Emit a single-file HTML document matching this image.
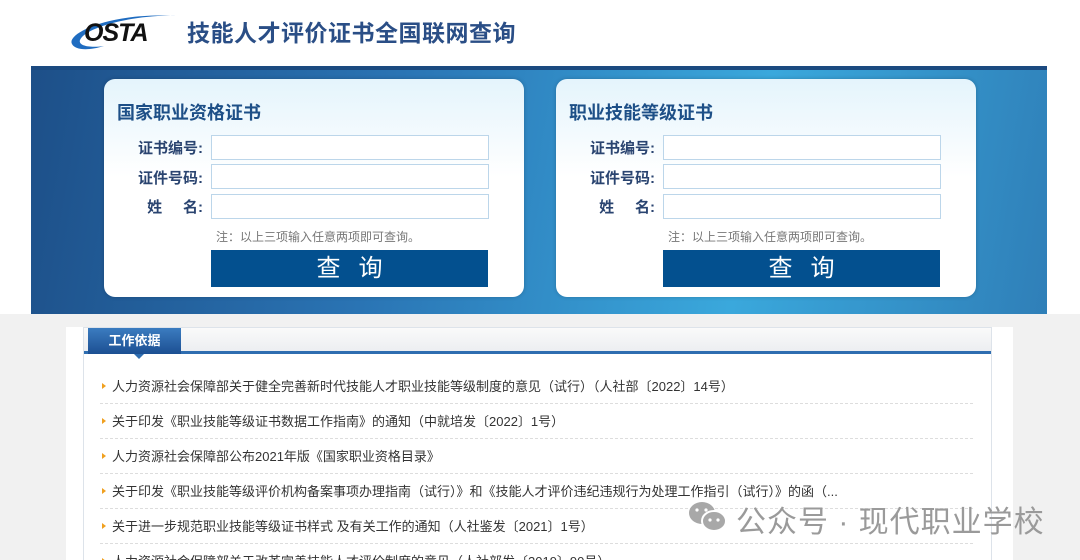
<!DOCTYPE html>
<html style="width:1080px;height:560px;overflow:hidden"><head><meta charset="utf-8"><style>
*{margin:0;padding:0;box-sizing:border-box}
body{width:1080px;height:560px;overflow:hidden;background:#fff;font-family:"Liberation Sans","Noto Sans CJK SC",sans-serif;position:relative}
.abs{position:absolute}
.title{left:187px;top:14px;font-size:23px;font-weight:bold;color:#2a4e86;letter-spacing:0.5px}
.banner{left:31px;top:66px;width:1016px;height:248px;background:linear-gradient(100deg,#1d4f88 0%,#2a74b4 35%,#3aa8dc 70%,#2f7fb8 100%);border-top:4px solid #1b4a80}
.card{width:420px;height:218px;top:79px;border-radius:11px;background:linear-gradient(#e4f4fc,#fff 45%);box-shadow:0 0 4px rgba(0,0,0,.2)}
.card h2{position:absolute;left:13px;top:20px;font-size:18px;color:#1d4f87;font-weight:bold}
.lab{position:absolute;right:321px;font-size:15px;font-weight:bold;color:#2a4470;text-align:right;width:80px}
.inp{position:absolute;left:107px;width:278px;height:25px;border:1px solid #bcd6ea;background:#fff}
.note{position:absolute;left:112px;top:149px;font-size:12px;color:#777}
.btn{position:absolute;left:107px;top:171px;width:277px;height:37px;background:#03508f;color:#fff;font-size:24px;text-align:center;line-height:37px;letter-spacing:18px;text-indent:18px}
.gray{left:0;top:314px;width:1080px;height:246px;background:#f1f1f1}
.box{left:66px;top:327px;width:947px;height:233px;background:#fff}
.panel{left:83px;top:327px;width:909px;height:233px;border:1px solid #dde3ea;border-bottom:none;background:#fff}
.tabbar{left:84px;top:328px;width:907px;height:26px;background:linear-gradient(#fafafa,#eceef1);border-bottom:3px solid #2e6db0}
.tab{left:88px;top:328px;width:93px;height:26px;background:linear-gradient(#3b7cc0,#1c4f92);color:#fff;font-size:13px;font-weight:bold;text-align:center;line-height:26px}
.arr{left:134px;top:354px;width:0;height:0;border-left:5px solid transparent;border-right:5px solid transparent;border-top:5px solid #2e6db0}
.item{left:100px;width:873px;height:35px;font-size:13px;color:#333;border-bottom:1px dashed #ddd;line-height:35px;padding-left:12px;white-space:nowrap;overflow:hidden}
.item:before{content:"";position:absolute;left:2px;top:14px;border-top:3px solid transparent;border-bottom:3px solid transparent;border-left:4px solid #f0a020}
.wm{left:736px;top:497px;font-size:30px;color:#9a9a9a;letter-spacing:1px}
</style></head><body>
<svg class="abs" style="left:68px;top:8px" width="112" height="44" viewBox="0 0 112 44">
<path d="M4 36 C-2 26 40 4 108 8 C72 6 18 18 12 32 C10 38 22 40 36 38 C20 43 7 42 4 36Z" fill="#1f6cc0"/>
<text x="16" y="33" font-family="Liberation Sans" font-style="italic" font-weight="bold" font-size="25" fill="#111" letter-spacing="-1">OSTA</text>
</svg>
<div class="abs title">技能人才评价证书全国联网查询</div>
<div class="abs banner"></div>
<div class="abs card" style="left:104px">
<h2>国家职业资格证书</h2>
<div class="lab" style="top:58px">证书编号:</div><div class="inp" style="top:56px"></div>
<div class="lab" style="top:88px">证件号码:</div><div class="inp" style="top:85px"></div>
<div class="lab" style="top:117px">姓&nbsp;&nbsp;&nbsp;&nbsp;&nbsp;名:</div><div class="inp" style="top:115px"></div>
<div class="note">注：以上三项输入任意两项即可查询。</div>
<div class="btn">查询</div>
</div>
<div class="abs card" style="left:556px">
<h2>职业技能等级证书</h2>
<div class="lab" style="top:58px">证书编号:</div><div class="inp" style="top:56px"></div>
<div class="lab" style="top:88px">证件号码:</div><div class="inp" style="top:85px"></div>
<div class="lab" style="top:117px">姓&nbsp;&nbsp;&nbsp;&nbsp;&nbsp;名:</div><div class="inp" style="top:115px"></div>
<div class="note">注：以上三项输入任意两项即可查询。</div>
<div class="btn">查询</div>
</div>
<div class="abs gray"></div>
<div class="abs box"></div>
<div class="abs panel"></div>
<div class="abs tabbar"></div>
<div class="abs tab">工作依据</div>
<div class="abs arr"></div>
<div class="abs item" style="top:369px">人力资源社会保障部关于健全完善新时代技能人才职业技能等级制度的意见（试行）（人社部〔2022〕14号）</div>
<div class="abs item" style="top:404px">关于印发《职业技能等级证书数据工作指南》的通知（中就培发〔2022〕1号）</div>
<div class="abs item" style="top:439px">人力资源社会保障部公布2021年版《国家职业资格目录》</div>
<div class="abs item" style="top:474px">关于印发《职业技能等级评价机构备案事项办理指南（试行）》和《技能人才评价违纪违规行为处理工作指引（试行）》的函（...</div>
<div class="abs item" style="top:509px">关于进一步规范职业技能等级证书样式 及有关工作的通知（人社鉴发〔2021〕1号）</div>
<div class="abs item" style="top:544px;height:16px;line-height:35px;border-bottom:none">人力资源社会保障部关于改革完善技能人才评价制度的意见（人社部发〔2019〕90号）</div>
<svg class="abs" style="left:688px;top:500px" width="40" height="34" viewBox="0 0 40 34">
<ellipse cx="14" cy="13" rx="13" ry="11" fill="#a8a8a8"/>
<ellipse cx="26" cy="21" rx="12" ry="10" fill="#a8a8a8" stroke="#fff" stroke-width="2"/>
<circle cx="22" cy="20" r="1.6" fill="#fff"/><circle cx="30" cy="20" r="1.6" fill="#fff"/>
<circle cx="9" cy="10" r="1.6" fill="#fff"/><circle cx="18" cy="10" r="1.6" fill="#fff"/>
</svg>
<div class="abs wm">公众号 · 现代职业学校</div>
</body></html>
